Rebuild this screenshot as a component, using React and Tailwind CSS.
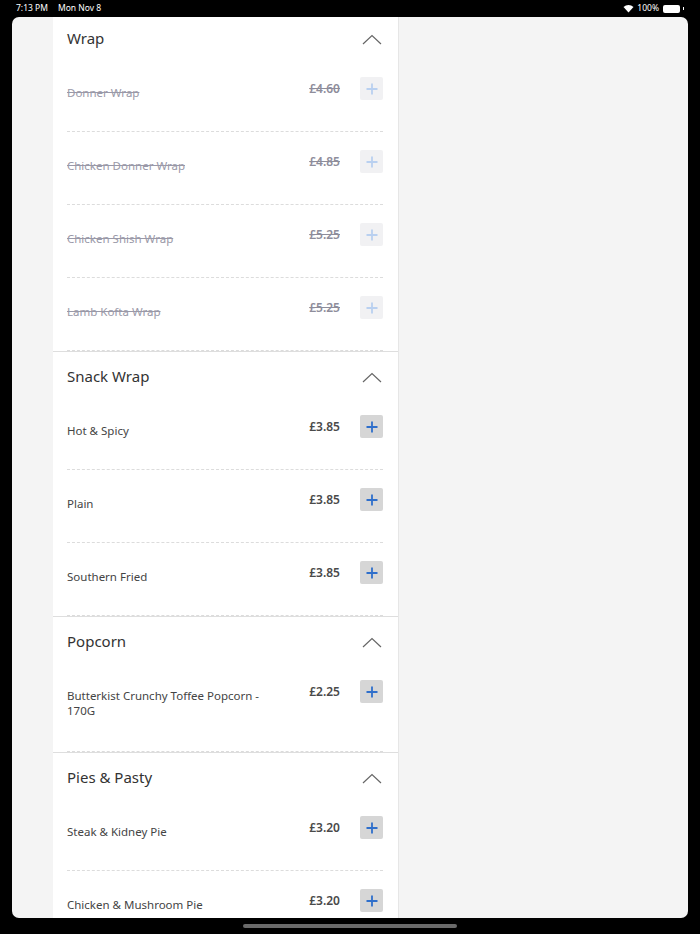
import React from "react";

const sections = [
  {
    title: "Wrap",
    items: [
      { name: "Donner Wrap", price: "£4.60", off: true },
      { name: "Chicken Donner Wrap", price: "£4.85", off: true },
      { name: "Chicken Shish Wrap", price: "£5.25", off: true },
      { name: "Lamb Kofta Wrap", price: "£5.25", off: true }
    ]
  },
  {
    title: "Snack Wrap",
    items: [
      { name: "Hot & Spicy", price: "£3.85" },
      { name: "Plain", price: "£3.85" },
      { name: "Southern Fried", price: "£3.85" }
    ]
  },
  {
    title: "Popcorn",
    items: [{ name: "Butterkist Crunchy Toffee Popcorn - 170G", price: "£2.25", tall: true }]
  },
  {
    title: "Pies & Pasty",
    items: [
      { name: "Steak & Kidney Pie", price: "£3.20" },
      { name: "Chicken & Mushroom Pie", price: "£3.20" }
    ]
  }
];

function Chevron() {
  return (
    <svg width="20" height="11" viewBox="0 0 20 11" fill="none">
      <polyline points="1,10 10,1.5 19,10" stroke="#666" strokeWidth="1.2" />
    </svg>
  );
}

function PlusButton({ off }) {
  return (
    <div
      className={
        off
          ? "w-[23px] h-[23px] rounded-[2px] bg-[#f1f1f3] flex items-center justify-center shrink-0"
          : "w-[23px] h-[23px] rounded-[2px] bg-[#d6d6d6] flex items-center justify-center shrink-0"
      }
    >
      <svg width="12" height="12" viewBox="0 0 12 12">
        <path d="M6 0.5v11M0.5 6h11" stroke={off ? "#b9d0f0" : "#2f6fcb"} strokeWidth="1.8" />
      </svg>
    </div>
  );
}

function Item({ item }) {
  return (
    <div
      className={
        item.tall
          ? "pt-[18px] pb-[33px] border-b border-dashed border-[#dcdcdc] flex items-start"
          : "pt-[18px] pb-[31px] border-b border-dashed border-[#dcdcdc] flex items-start"
      }
    >
      <div
        className={
          item.off
            ? "w-[200px] mt-[8px] text-[11.5px] leading-[15px] text-[#9a99a8] line-through"
            : "w-[200px] mt-[8px] text-[11.5px] leading-[15px] text-[#444]"
        }
      >
        {item.name}
      </div>
      <div className="flex-1" />
      <div
        className={
          item.off
            ? "mt-[4px] text-[12px] leading-[16px] font-semibold text-[#8e8d9b] line-through"
            : "mt-[4px] text-[12px] leading-[16px] font-semibold text-[#4a4a4a]"
        }
      >
        {item.price}
      </div>
      <div className="w-[20px]" />
      <PlusButton off={item.off} />
    </div>
  );
}

function Section({ section }) {
  return (
    <div className="border-b border-[#dedede]">
      <div className="h-[45px] px-[14px] pr-[16px] flex items-start justify-between pt-[12px]">
        <div className="text-[15px] leading-[24px] text-[#333]">{section.title}</div>
        <div className="mt-[8px]">
          <Chevron />
        </div>
      </div>
      <div className="px-[14px] pr-[15px]">
        {section.items.map((item) => (
          <Item key={item.name} item={item} />
        ))}
      </div>
    </div>
  );
}

export default function App() {
  return (
    <div
      className="w-[700px] h-[934px] bg-black flex flex-col overflow-hidden"
      style={{ fontFamily: '"Noto Sans", "Open Sans", sans-serif' }}
    >
      <div className="h-[17px] shrink-0 flex items-center justify-between px-[16px] text-white text-[8.5px]">
        <div className="flex gap-[10px]">
          <span>7:13 PM</span>
          <span>Mon Nov 8</span>
        </div>
        <div className="flex items-center gap-[3px]">
          <svg width="11" height="9" viewBox="0 0 11 9">
            <path d="M5.5 8.5 L0.5 3 A7.5 7.5 0 0 1 10.5 3 Z" fill="white" />
          </svg>
          <span>100%</span>
          <div className="w-[17px] h-[8px] rounded-[2px] bg-white ml-[1px]" />
          <div className="w-[1px] h-[3px] bg-white" />
        </div>
      </div>
      <div className="mx-[12px] h-[901px] rounded-[7px] overflow-hidden bg-[#f4f4f4] flex">
        <div className="w-[41px] shrink-0" />
        <div className="w-[346px] shrink-0 bg-white border-r border-[#e6e6e6] -mt-[3px]">
          {sections.map((s) => (
            <Section key={s.title} section={s} />
          ))}
        </div>
      </div>
      <div className="flex-1 flex items-center justify-center">
        <div className="w-[214px] h-[4px] rounded-full bg-[#6a6a6a]" />
      </div>
    </div>
  );
}
